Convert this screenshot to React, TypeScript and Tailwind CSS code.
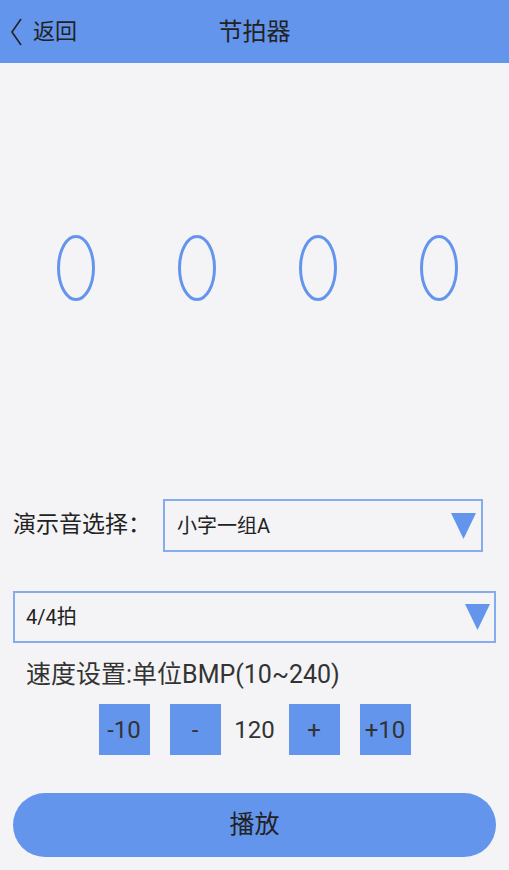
import React, { useState } from 'react';

const font = { fontFamily: 'Roboto, "Noto Sans CJK SC", sans-serif' };

const Triangle = () => (
  <svg width="25" height="26" viewBox="0 0 25 26" className="shrink-0">
    <polygon points="0,0 25,0 12.5,26" fill="#6495ed" />
  </svg>
);

const Oval = () => (
  <svg width="40" height="68" viewBox="0 0 40 68">
    <ellipse cx="20" cy="34" rx="17.5" ry="31.5" fill="none" stroke="#6495ed" strokeWidth="3" />
  </svg>
);

export default function App() {
  const [bpm, setBpm] = useState(120);
  const clamp = (v: number) => Math.min(240, Math.max(10, v));

  return (
    <div className="w-[509px] h-[870px] bg-[#f4f4f6] flex flex-col text-[#222]" style={font}>
      {/* header */}
      <div className="h-[63px] bg-[#6495ed] flex items-center relative shrink-0">
        <div className="flex items-center pl-[9px]">
          <svg width="14" height="28" viewBox="0 0 14 28">
            <path d="M12 1 L3 14 L12 27" fill="none" stroke="#222" strokeWidth="1.6" />
          </svg>
          <span className="ml-[10px] text-[22px] leading-none">返回</span>
        </div>
        <div className="absolute left-0 right-0 top-0 h-full flex items-center justify-center pointer-events-none">
          <span className="text-[24px] leading-none">节拍器</span>
        </div>
      </div>

      {/* beat indicators */}
      <div className="flex gap-[81px] pl-[56px] pt-[171px] mb-[197px]">
        <Oval />
        <Oval />
        <Oval />
        <Oval />
      </div>

      {/* sound select */}
      <div className="flex items-center pl-[13px] pr-[26px]">
        <span className="text-[23px] w-[150px] shrink-0">演示音选择：</span>
        <div className="flex-1 h-[53px] border-2 border-[#86acf0] flex items-center justify-between pl-[12px] pr-[5px]">
          <span className="text-[20px]">小字一组A</span>
          <Triangle />
        </div>
      </div>

      {/* beat select */}
      <div className="mx-[13px] mt-[39px] h-[52px] border-2 border-[#86acf0] flex items-center justify-between pl-[11px] pr-[4px]">
        <span className="text-[20px]">4/4拍</span>
        <Triangle />
      </div>

      <div className="mt-[16px] pl-[26px] text-[25px] leading-[32px] text-[#333]">速度设置:单位BMP(10~240)</div>

      {/* bpm controls */}
      <div className="mt-[13px] flex items-center justify-center text-[24px] text-[#333]">
        <button onClick={() => setBpm(clamp(bpm - 10))} className="w-[51px] h-[51px] bg-[#6495ed] flex items-center justify-center">-10</button>
        <button onClick={() => setBpm(clamp(bpm - 1))} className="ml-[20px] w-[51px] h-[51px] bg-[#6495ed] flex items-center justify-center">-</button>
        <span className="w-[68px] text-center">{bpm}</span>
        <button onClick={() => setBpm(clamp(bpm + 1))} className="w-[51px] h-[51px] bg-[#6495ed] flex items-center justify-center">+</button>
        <button onClick={() => setBpm(clamp(bpm + 10))} className="ml-[20px] w-[51px] h-[51px] bg-[#6495ed] flex items-center justify-center">+10</button>
      </div>

      <button className="mx-[13px] mt-[38px] h-[64px] rounded-full bg-[#6495ed] text-[25px] text-[#222] flex items-center justify-center">
        播放
      </button>
    </div>
  );
}
